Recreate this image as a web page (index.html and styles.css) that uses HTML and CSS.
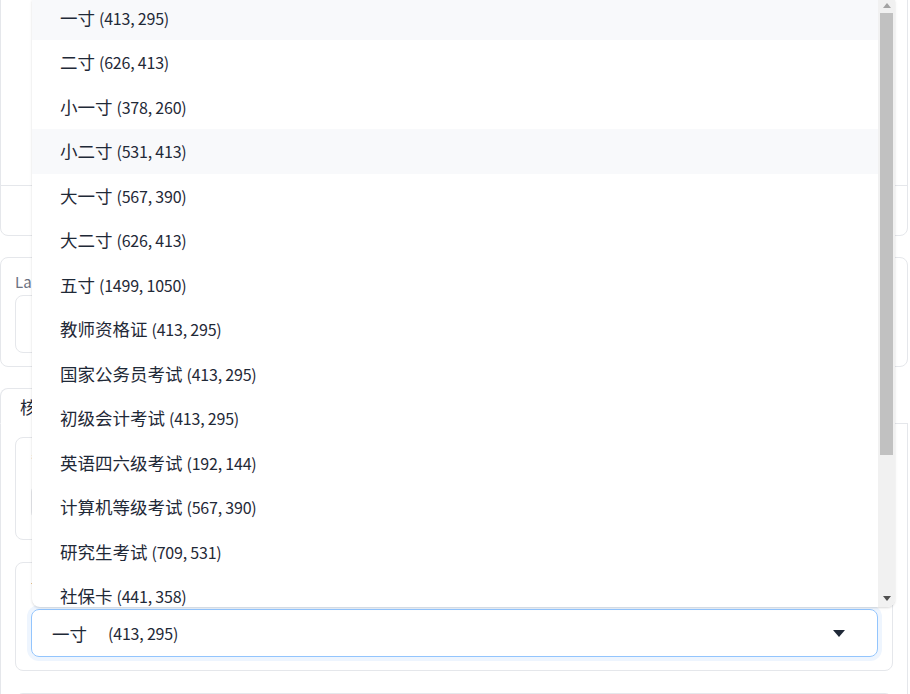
FILE: index.html
```html
<!DOCTYPE html>
<html lang="zh">
<head>
<meta charset="utf-8">
<title>证件照</title>
<link rel="stylesheet" href="styles.css">
</head>
<body>
<div class="page">
  <div class="block form-top">
    <div class="section image-area"></div>
    <div class="section row-area"></div>
  </div>

  <div class="block panel">
    <div class="label">Language</div>
    <div class="field tall"></div>
  </div>

  <div class="tabs">
    <div class="tab-nav">
      <button class="tab selected">核心参数</button>
      <button class="tab">美颜参数</button>
    </div>
    <div class="tab-body">
      <div class="box box-a">
        <div class="label accent">背景颜色</div>
        <div class="field small"></div>
      </div>
      <div class="box box-b">
        <div class="label dark">证件照尺寸</div>
        <div class="select">
          <span class="sel-name">一寸</span><span class="sel-val">(413, 295)</span>
          <svg class="caret" width="12" height="7" viewBox="0 0 12 7"><polygon points="0,0 12,0 6,7" fill="#1f2937"/></svg>
        </div>
      </div>
      <div class="box box-c"></div>
    </div>
  </div>

  <div class="dropdown">
    <div class="options-view">
      <ul class="options">
        <li class="option active">一寸 <span class="dims">(413, 295)</span></li>
        <li class="option">二寸 <span class="dims">(626, 413)</span></li>
        <li class="option">小一寸 <span class="dims">(378, 260)</span></li>
        <li class="option hover">小二寸 <span class="dims">(531, 413)</span></li>
        <li class="option">大一寸 <span class="dims">(567, 390)</span></li>
        <li class="option">大二寸 <span class="dims">(626, 413)</span></li>
        <li class="option">五寸 <span class="dims">(1499, 1050)</span></li>
        <li class="option">教师资格证 <span class="dims">(413, 295)</span></li>
        <li class="option">国家公务员考试 <span class="dims">(413, 295)</span></li>
        <li class="option">初级会计考试 <span class="dims">(413, 295)</span></li>
        <li class="option">英语四六级考试 <span class="dims">(192, 144)</span></li>
        <li class="option">计算机等级考试 <span class="dims">(567, 390)</span></li>
        <li class="option">研究生考试 <span class="dims">(709, 531)</span></li>
        <li class="option">社保卡 <span class="dims">(441, 358)</span></li>
      </ul>
    </div>
    <div class="scrollbar">
      <svg class="sb-arrow" width="8" height="5" viewBox="0 0 8 5"><polygon points="4,0 8,5 0,5" fill="#a3a3a3"/></svg>
      <div class="sb-track"><div class="sb-thumb"></div></div>
      <svg class="sb-arrow" width="8" height="5" viewBox="0 0 8 5"><polygon points="0,0 8,0 4,5" fill="#505050"/></svg>
    </div>
  </div>
</div>
</body>
</html>
```

FILE: styles.css
```css
html, body {
  margin: 0;
  padding: 0;
  background: #ffffff;
  overflow: hidden;
}

body {
  font-family: "Noto Sans CJK SC", "Noto Sans", sans-serif;
  color: #1f2937;
  font-size: 16px;
}

.page {
  position: relative;
  width: 908px;
  display: flex;
  flex-direction: column;
  gap: 21px;
}

.block {
  border: 1px solid #e5e7eb;
  border-radius: 8px;
  background: #fff;
}

.form-top {
  margin-top: -12px;
  overflow: hidden;
}

.image-area {
  height: 196px;
}

.row-area {
  height: 49px;
  border-top: 1px solid #e5e7eb;
}

.panel {
  box-sizing: border-box;
  height: 110px;
  padding: 14px 14px 12px;
  display: flex;
  flex-direction: column;
  gap: 3px;
}

.label {
  font-size: 15px;
  line-height: 20px;
  color: #6b7280;
}

.label.dark {
  color: #374151;
}

.field {
  border: 1px solid #e5e7eb;
  border-radius: 8px;
  background: #fff;
}

.field.tall {
  height: 56px;
}

.field.small {
  height: 34px;
  margin-top: 14px;
}

.tabs {
  display: flex;
  flex-direction: column;
}

.tab-nav {
  display: flex;
  height: 35px;
  border-bottom: 1px solid #e5e7eb;
}

.tab {
  font-family: inherit;
  font-size: 17px;
  background: transparent;
  border: 1px solid transparent;
  color: #6b7280;
  padding: 0 19px;
  height: 36px;
  margin-bottom: -1px;
  border-radius: 8px 8px 0 0;
}

.tab.selected {
  color: #1f2937;
  border-color: #e5e7eb;
  border-bottom-color: #fff;
  background: #fff;
}

.tab-body {
  border: 1px solid #e5e7eb;
  border-top: none;
  border-radius: 0 0 8px 8px;
  padding: 13px 14px 14px;
  display: flex;
  flex-direction: column;
  gap: 22px;
  min-height: 300px;
}

.box {
  border: 1px solid #e5e7eb;
  border-radius: 8px;
  background: #fff;
}

.box-a {
  box-sizing: border-box;
  height: 103px;
  padding: 12px 15px;
}

.box-b {
  box-sizing: border-box;
  height: 109px;
  padding: 12px 14px 13px 15px;
  display: flex;
  flex-direction: column;
  gap: 14px;
}

.box-c {
  height: 80px;
}

.select {
  box-sizing: border-box;
  height: 48px;
  border: 1px solid #93c5fd;
  border-radius: 8px;
  box-shadow: 0 0 0 4px #eef5fe;
  display: flex;
  align-items: center;
  padding: 0 32px 0 20px;
  font-size: 16px;
}

.sel-name {
  font-size: 17.5px;
  margin-right: 21px;
}

.sel-val {
  flex: 1;
  letter-spacing: -0.2px;
}

.caret {
  display: block;
}

.dropdown {
  position: absolute;
  left: 32px;
  top: 0;
  width: 863px;
  height: 607px;
  display: flex;
  background: #fff;
  border-radius: 0 0 8px 8px;
  box-shadow: 0 1px 3px rgba(0, 0, 0, 0.1), 0 1px 2px rgba(0, 0, 0, 0.06);
  overflow: hidden;
  z-index: 10;
}

.options-view {
  flex: 1;
  overflow: hidden;
}

.options {
  list-style: none;
  margin: -4.5px 0 0;
  padding: 0;
}

.option {
  height: 44.5px;
  line-height: 44.5px;
  padding: 0 28px;
  font-size: 17.5px;
  color: #1f2937;
  white-space: nowrap;
}

.dims {
  font-size: 16px;
  letter-spacing: -0.2px;
}

.option.active,
.option.hover {
  background: #f8f9fb;
}

.scrollbar {
  width: 17px;
  background: #f1f1f1;
  display: flex;
  flex-direction: column;
  align-items: center;
}

.sb-arrow {
  display: block;
  flex: none;
  margin: 3px 0 5px;
}

.scrollbar .sb-arrow:last-child {
  margin: 4px 0 6px;
}

.sb-track {
  flex: 1;
  width: 100%;
  display: flex;
  flex-direction: column;
  align-items: center;
}

.sb-thumb {
  width: 13px;
  height: 442px;
  background: #c1c1c1;
}
```
